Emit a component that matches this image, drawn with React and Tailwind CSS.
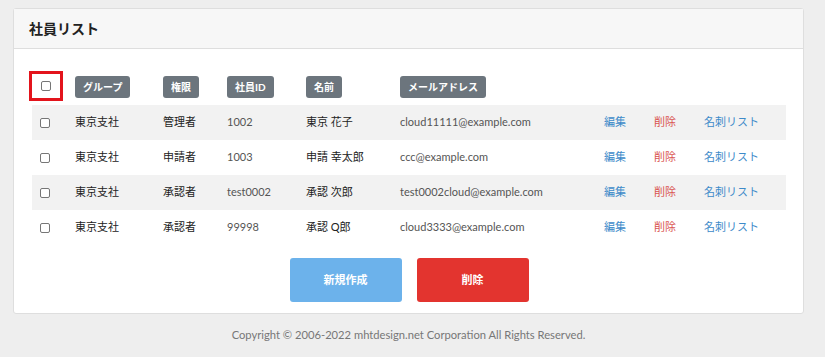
import React from 'react'

const rows = [
  { group: '東京支社', role: '管理者', id: '1002', name: '東京 花子', mail: 'cloud11111@example.com' },
  { group: '東京支社', role: '申請者', id: '1003', name: '申請 幸太郎', mail: 'ccc@example.com' },
  { group: '東京支社', role: '承認者', id: 'test0002', name: '承認 次郎', mail: 'test0002cloud@example.com' },
  { group: '東京支社', role: '承認者', id: '99998', name: '承認 Q郎', mail: 'cloud3333@example.com' },
]

const jp = { fontFamily: '"Lato", "Noto Sans CJK JP", sans-serif' }

const Check = () => (
  <span className="block w-[10px] h-[10px] border border-[#767676] rounded-[2px] bg-white" />
)

const Badge = ({ children }) => (
  <span className="inline-flex items-center h-[22px] px-[8px] rounded-[3px] bg-[#6c757d] text-white text-[10px] font-bold">
    {children}
  </span>
)

const App = () => {
  return (
    <div className="w-[825px] h-[357px] bg-[#eeeeee] pt-[8px] overflow-hidden" style={jp}>
      <div className="ml-[13px] w-[791px] bg-white border border-[#dedede] rounded-[3px]">
        <div className="h-[40px] bg-[#f7f7f7] border-b border-[#dedede] flex items-center px-[15px]">
          <h1 className="text-[14px] font-bold text-[#222]">社員リスト</h1>
        </div>

        <div className="pl-[18px] pr-[17px] pt-[17px] pb-[11px]">
          {/* header */}
          <div className="flex items-center h-[39px]">
            <div className="w-[43px]">
              <div className="ml-[-3px] w-[34px] h-[30px] border-[3px] border-[#e3141c] flex items-center justify-center">
                <Check />
              </div>
            </div>
            <div className="w-[88px]"><Badge>グループ</Badge></div>
            <div className="w-[64px]"><Badge>権限</Badge></div>
            <div className="w-[79px]"><Badge>社員ID</Badge></div>
            <div className="w-[94px]"><Badge>名前</Badge></div>
            <div className="w-[204px]"><Badge>メールアドレス</Badge></div>
          </div>

          {/* rows */}
          {rows.map((r, i) => (
            <div
              key={i}
              className={`flex items-center h-[35px] text-[11px] ${i % 2 === 0 ? 'bg-[#f2f2f2]' : 'bg-white'}`}
            >
              <div className="w-[43px] pl-[8px]"><Check /></div>
              <div className="w-[88px] text-[#222]">{r.group}</div>
              <div className="w-[64px] text-[#222]">{r.role}</div>
              <div className="w-[79px] text-[#555]">{r.id}</div>
              <div className="w-[94px] text-[#222]">{r.name}</div>
              <div className="w-[204px] text-[#555]">{r.mail}</div>
              <div className="w-[50px] text-[#3d8ac9]">編集</div>
              <div className="w-[50px] text-[#d9534f]">削除</div>
              <div className="text-[#3d8ac9]">名刺リスト</div>
            </div>
          ))}

          <div className="flex justify-center gap-[15px] mt-[13px]">
            <button className="w-[112px] h-[44px] rounded-[3px] bg-[#6cb2eb] text-white text-[11px] font-bold">
              新規作成
            </button>
            <button className="w-[112px] h-[44px] rounded-[3px] bg-[#e3342f] text-white text-[11px] font-bold">
              削除
            </button>
          </div>
        </div>
      </div>

      <p className="ml-[13px] w-[791px] mt-[13px] text-center text-[11.2px] text-[#777]">
        Copyright © 2006-2022 mhtdesign.net Corporation All Rights Reserved.
      </p>
    </div>
  )
}

export default App
